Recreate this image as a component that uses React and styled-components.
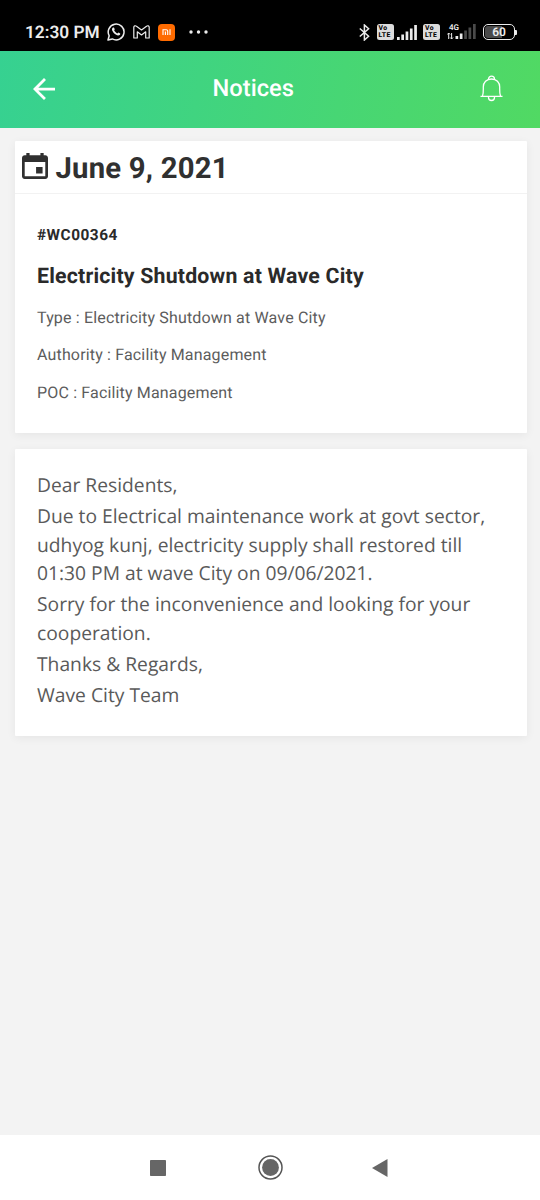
import React from 'react'
import styled, {createGlobalStyle} from 'styled-components'

const GlobalStyle = createGlobalStyle`
    * {
        box-sizing: border-box;
    }

    body {
        margin: 0;
        background: #f3f3f3;
        font-family: Roboto, sans-serif;
        text-rendering: geometricPrecision;
    }
`;

const Screen = styled.div`
    display: flex;
    flex-direction: column;
    height: 1200px;
    width: 540px;
    background: #f3f3f3;
    overflow: hidden;
`;

const StatusBar = styled.div`
    display: flex;
    justify-content: space-between;
    flex: none;
    height: 51px;
    padding: 13px 23px 0 25px;
    background: #000;
    color: #ececec;
`;

const StatusGroup = styled.div`
    display: flex;
    align-items: center;
    height: 38px;
`;

const Time = styled.span`
    width: 82px;
    padding-top: 2px;
    font-size: 17.3px;
    font-weight: 600;
    white-space: nowrap;
`;

const Icon = styled.svg`
    display: block;
    flex: none;
    margin-left: ${props => props.$gap || 0}px;
`;

const MiBadge = styled.div`
    display: flex;
    align-items: center;
    justify-content: center;
    width: 17px;
    height: 17px;
    margin-left: 8px;
    border-radius: 4px;
    background: #ff6b00;
`;

const VolteBadge = styled.div`
    display: flex;
    flex-direction: column;
    justify-content: center;
    width: 17px;
    height: 16px;
    margin-left: ${props => props.$gap}px;
    padding-left: 2px;
    border-radius: 2.5px;
    background: #dcdcdc;
    color: #000;
    font-size: 6.8px;
    font-weight: 800;
    letter-spacing: .4px;
    line-height: 7px;
`;

const MobileData = styled.div`
    display: flex;
    flex-direction: column;
    width: 30px;
    height: 16px;
    margin-left: 7px;
`;

const NetworkType = styled.span`
    height: 7px;
    padding-left: 2px;
    font-size: 8px;
    font-weight: 600;
    line-height: 7px;
`;

const DataSignal = styled(Icon)`
    margin-top: -7px;
`;

const Battery = styled.div`
    display: flex;
    align-items: center;
    margin-left: 6px;
`;

const BatteryLevel = styled.div`
    width: 32px;
    height: 16px;
    padding: 1px;
    border: 1.5px solid #ececec;
    border-radius: 5px;
    background: linear-gradient(to right, #4a4a4a 60%, #000 60%) content-box;
    font-size: 12px;
    font-weight: 600;
    line-height: 12px;
    text-align: center;
`;

const BatteryTip = styled.div`
    width: 2px;
    height: 5px;
    border-radius: 0 1px 1px 0;
    background: #ececec;
`;

const Header = styled.header`
    display: flex;
    align-items: center;
    flex: none;
    height: 77px;
    padding: 0 37.5px 1px 33px;
    background: linear-gradient(100deg, #36d191, #51d963);
`;

const Title = styled.h1`
    flex: 1;
    margin: 0 0 2px 157.5px;
    color: #fff;
    font-size: 23.7px;
    font-weight: 500;
    line-height: 30px;
`;

const BellIcon = styled(Icon)`
    margin-bottom: 2px;
`;

const Content = styled.main`
    display: flex;
    flex-direction: column;
    flex: 1;
    gap: 15.5px;
    padding: 13px 13.5px 0 14.5px;
`;

const Card = styled.section`
    border-radius: 1px;
    background: #fff;
    box-shadow: 0 2px 10px rgba(0, 0, 0, .06);
`;

const DateRow = styled.div`
    display: flex;
    align-items: center;
    height: 53px;
    padding: 0 7px;
    border-bottom: 1.5px solid #f2f2f2;
    color: #303030;
`;

const DateIcon = styled(Icon)`
    margin-bottom: 2px;
`;

const DateText = styled.h2`
    margin: 4px 0 0 8px;
    font-size: 29.3px;
    font-weight: 700;
    letter-spacing: .2px;
    line-height: 34px;
`;

const Details = styled.div`
    height: 239px;
    padding: 31px 22.5px 0;
`;

const NoticeId = styled.div`
    color: #2a2a2a;
    font-size: 15.4px;
    font-weight: 700;
    letter-spacing: .5px;
    line-height: 20px;
`;

const NoticeTitle = styled.h3`
    margin: 17px 0 7px;
    color: #2a2a2a;
    font-size: 21.3px;
    font-weight: 700;
    letter-spacing: .2px;
    line-height: 30px;
`;

const Detail = styled.p`
    margin: 0;
    color: #5c5c5c;
    font-size: 16px;
    letter-spacing: .16px;
    line-height: 37.3px;
`;

const Message = styled.div`
    height: 287px;
    padding: 22.5px 22.5px 0;
    color: #5a5a5a;
    font-family: 'Open Sans', sans-serif;
    font-size: 19.25px;
    line-height: 28.5px;
`;

const Line = styled.p`
    margin: 0 0 2.7px;
`;

const NavBar = styled.nav`
    display: flex;
    align-items: center;
    flex: none;
    height: 65px;
    padding-left: 150px;
    background: #fff;
`;

const details = [
    {label: 'Type', value: 'Electricity Shutdown at Wave City'},
    {label: 'Authority', value: 'Facility Management'},
    {label: 'POC', value: 'Facility Management'},
];

const message = [
    <>Dear Residents,</>,
    <>Due to Electrical maintenance work at govt sector,<br/>udhyog kunj, electricity supply shall restored till<br/>01:30 PM at wave City on 09/06/2021.</>,
    <>Sorry for the inconvenience and looking for your<br/>cooperation.</>,
    <>Thanks &amp; Regards,</>,
    <>Wave City Team</>,
];

function Volte({gap}) {
    return (
        <VolteBadge $gap={gap}>
            <span>Vo</span>
            <span>LTE</span>
        </VolteBadge>
    )
}

function StatusIcons() {
    return (
        <StatusBar>
            <StatusGroup>
                <Time>12:30 PM</Time>
                <Icon width="18" height="18" viewBox="0 0 18 18" fill="none" stroke="#ececec">
                    <path d="M1 17l1.2-4.2A7.9 7.9 0 1 1 5.3 15.900z" strokeWidth="1.5" strokeLinejoin="round"/>
                    <path d="M5.700 4.800c.5-.6 1.200-.5 1.400 0l.6 1.500c.1.3-.6 1-.5 1.300.6 1.200 1.700 2.200 3 2.800.4.100 1-.9 1.400-.8l1.500.8c.4.300.1 1.300-.5 1.700-1 .7-2.400.4-3.900-.5-1.600-1-2.900-2.500-3.500-4-.4-1.100-.2-2.100.5-2.800z" fill="#ececec" stroke="none"/>
                </Icon>
                <Icon $gap={8} width="17" height="14" viewBox="0 0 17 14" fill="none" stroke="#ececec" strokeWidth="1.2" strokeLinejoin="round">
                    <path d="M.8 2.300V13h3.500V6.800l4.200 3.200 4.200-3.200V13h3.500V2.300c0-1.500-1.600-2-2.700-1.100L8.500 5 3.500 1.200C2.400.3.8.8.8 2.300z"/>
                </Icon>
                <MiBadge>
                    <Icon width="9" height="6" viewBox="0 0 9 6" fill="none" stroke="#fff" strokeWidth="1.100">
                        <path d="M1 6V.7h3.300c1 0 1.400.5 1.400 1.400V6M3.400 6V2.400M8 6V.2"/>
                    </Icon>
                </MiBadge>
                <Icon $gap={14} width="19" height="4" viewBox="0 0 19 4" fill="#ececec">
                    <circle cx="2" cy="2" r="1.700"/>
                    <circle cx="9.500" cy="2" r="1.700"/>
                    <circle cx="17" cy="2" r="1.700"/>
                </Icon>
            </StatusGroup>
            <StatusGroup>
                <Icon width="11" height="17" viewBox="0 0 11 17" fill="none" stroke="#ececec" strokeWidth="1.500">
                    <path d="M.8 4.500l8.800 7.800-4.200 3.700V1l4.200 3.700-8.800 7.800"/>
                </Icon>
                <Volte gap={6.5}/>
                <Icon $gap={3.5} width="20" height="15" viewBox="0 0 20 15" fill="#ececec">
                    <rect x="0" y="12" width="2.700" height="3"/>
                    <rect x="4.300" y="9.500" width="2.700" height="5.500"/>
                    <rect x="8.600" y="6.500" width="2.700" height="8.500"/>
                    <rect x="12.900" y="3.500" width="2.700" height="11.500"/>
                    <rect x="17.200" y="0" width="2.700" height="15"/>
                </Icon>
                <Volte gap={6}/>
                <MobileData>
                    <NetworkType>4G</NetworkType>
                    <DataSignal width="30" height="15" viewBox="0 0 30 15">
                        <path d="M1.700 15V9M.3 10.500L1.700 9l1.400 1.500M4.600 9v6M3.200 13.500L4.600 15 6 13.500" fill="none" stroke="#ececec"/>
                        <rect x="8.500" y="12" width="2.700" height="3" fill="#ececec"/>
                        <rect x="12.800" y="9.500" width="2.700" height="5.500" fill="#ececec"/>
                        <rect x="17.200" y="6.500" width="2.700" height="8.500" fill="#4a4a4a"/>
                        <rect x="21.500" y="3.500" width="2.700" height="11.500" fill="#4a4a4a"/>
                        <rect x="26" y="0" width="2.700" height="15" fill="#4a4a4a"/>
                    </DataSignal>
                </MobileData>
                <Battery>
                    <BatteryLevel>60</BatteryLevel>
                    <BatteryTip/>
                </Battery>
            </StatusGroup>
        </StatusBar>
    )
}

export default function App() {
    return (
        <Screen>
            <GlobalStyle/>
            <StatusIcons/>
            <Header>
                <Icon width="22" height="22" viewBox="85 85 342 342" fill="#fff">
                    <path d="M427 234.625H167.296l119.702-119.702L256 85 85 256l171 171 29.922-29.924-118.626-119.701H427v-42.750z"/>
                </Icon>
                <Title>Notices</Title>
                <BellIcon width="23" height="27" viewBox="0 0 23 27" fill="none" stroke="#fff" strokeWidth="1.300">
                    <path d="M.5 21.300h22M2.500 21c1.100-2.500.8-5.500.8-9C3.300 7.500 6.500 4 11.500 4s8.200 3.500 8.200 8c0 3.500-.3 6.500.8 9"/>
                    <path d="M8.500 4.200a3 3 0 0 1 6 0M8.500 21.500v1a3 3 0 0 0 6 0v-1"/>
                </BellIcon>
            </Header>
            <Content>
                <Card>
                    <DateRow>
                        <DateIcon width="26" height="26" viewBox="64 64 384 384" fill="#303030">
                            <path d="M368 272h-96v96h96v-96zm-32-208v32H176V64h-48v32h-24c-22 0-40 18-40 40v272c0 22 18 40 40 40h304c22 0 40-18 40-40V136c0-22-18-40-40-40h-24V64h-48zm72 344H104V196h304v212z"/>
                        </DateIcon>
                        <DateText>June 9, 2021</DateText>
                    </DateRow>
                    <Details>
                        <NoticeId>#WC00364</NoticeId>
                        <NoticeTitle>Electricity Shutdown at Wave City</NoticeTitle>
                        {details.map(({label, value}) => (
                            <Detail key={label}>{label} : {value}</Detail>
                        ))}
                    </Details>
                </Card>
                <Card>
                    <Message>
                        {message.map((line, i) => <Line key={i}>{line}</Line>)}
                    </Message>
                </Card>
            </Content>
            <NavBar>
                <Icon width="16" height="16" viewBox="0 0 16 16">
                    <rect width="16" height="16" rx=".8" fill="#666"/>
                </Icon>
                <Icon $gap={91.5} width="25" height="25" viewBox="0 0 25 25">
                    <circle cx="12.500" cy="12.500" r="11.500" fill="none" stroke="#555" strokeWidth="1.500"/>
                    <circle cx="12.500" cy="12.500" r="8.400" fill="#666"/>
                </Icon>
                <Icon $gap={89.5} width="16" height="18" viewBox="0 0 16 18">
                    <path d="M15.500 0v18L0 9z" fill="#666"/>
                </Icon>
            </NavBar>
        </Screen>
    )
}
